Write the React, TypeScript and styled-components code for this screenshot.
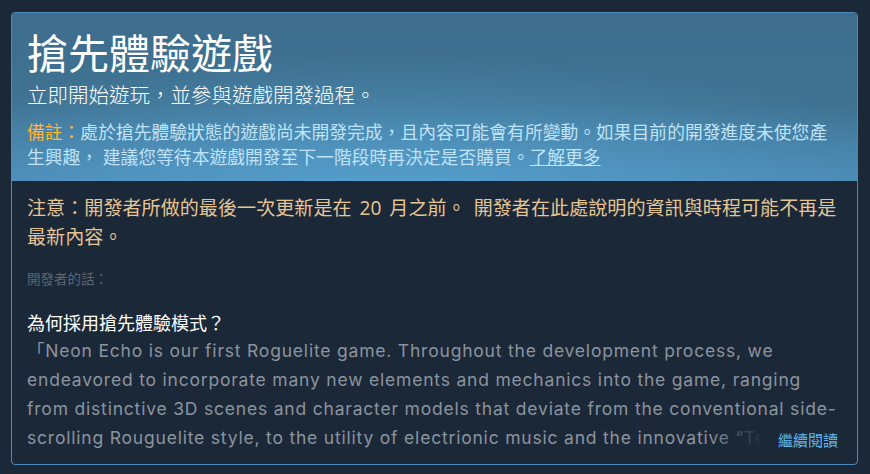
import React from "react";
import styled, { createGlobalStyle } from "styled-components";

const GlobalStyle = createGlobalStyle`
  html, body {
    margin: 0;
    padding: 0;
    background: #1b2838;
  }
  body {
    font-family: "Open Sans", "Noto Sans CJK TC", sans-serif;
  }
`;

const Page = styled.div`
  padding: 12px 13px 10px 11px;
  width: 870px;
  height: 474px;
  box-sizing: border-box;
`;

const Box = styled.section`
  width: 847px;
  height: 453px;
  box-sizing: border-box;
  border: 1px solid #4b8ac0;
  border-radius: 4px;
  overflow: hidden;
  display: flex;
  flex-direction: column;
  background: #1b2838;
`;

const Header = styled.header`
  padding: 17px 15px 11px 15px;
  background:
    radial-gradient(ellipse 70% 90% at 45% 115%, rgba(88, 165, 212, 0.85) 0%, rgba(88, 165, 212, 0) 100%),
    linear-gradient(180deg, #3e6d8e 0%, #3f7291 55%, #4a88b2 100%);
  display: flex;
  flex-direction: column;
`;

const Title = styled.h1`
  margin: 0;
  font-size: 41px;
  line-height: 46px;
  font-weight: 400;
  color: #ffffff;
`;

const Subtitle = styled.div`
  margin-top: 6px;
  font-size: 20.5px;
  line-height: 26px;
  font-weight: 300;
  color: #ffffff;
`;

const Note = styled.p`
  margin: 12px 0 0 0;
  font-size: 17.8px;
  line-height: 25px;
  color: #bfe3f8;
`;

const NoteLabel = styled.span`
  color: #ffb52e;
`;

const MoreLink = styled.a`
  color: #bfe3f8;
  text-decoration: underline;
`;

const Body = styled.div`
  padding: 13px 15px 0 15px;
  display: flex;
  flex-direction: column;
  flex: 1;
  min-height: 0;
`;

const Notice = styled.p`
  margin: 0;
  font-size: 19.1px;
  word-spacing: 3px;
  line-height: 29px;
  color: #e6c594;
`;

const DevLabel = styled.div`
  margin-top: 17px;
  font-size: 13.5px;
  line-height: 20px;
  color: #5a6775;
`;

const Question = styled.h2`
  margin: 21px 0 0 0;
  font-size: 18px;
  line-height: 26px;
  font-weight: 400;
  color: #ffffff;
`;

const ExcerptWrap = styled.div`
  position: relative;
  height: 118px;
  overflow: hidden;
`;

const Excerpt = styled.p`
  margin: 0;
  font-family: "Inter", "Noto Sans CJK TC", sans-serif;
  font-size: 17.5px;
  letter-spacing: 0.8px;
  line-height: 29px;
  color: #8b949e;
`;

const ReadMore = styled.a`
  position: absolute;
  right: 0;
  bottom: 0;
  height: 29px;
  padding-left: 70px;
  padding-right: 4px;
  display: flex;
  align-items: center;
  font-size: 15px;
  color: #5fb8f0;
  background: linear-gradient(90deg, rgba(27, 40, 56, 0) 0%, #1b2838 55px);
`;

export default function App() {
  return (
    <>
      <GlobalStyle />
      <Page>
        <Box>
          <Header>
            <Title>搶先體驗遊戲</Title>
            <Subtitle>立即開始遊玩，並參與遊戲開發過程。</Subtitle>
            <Note>
              <NoteLabel>備註：</NoteLabel>
              處於搶先體驗狀態的遊戲尚未開發完成，且內容可能會有所變動。如果目前的開發進度未使您產生興趣， 建議您等待本遊戲開發至下一階段時再決定是否購買。
              <MoreLink>了解更多</MoreLink>
            </Note>
          </Header>
          <Body>
            <Notice>
              注意：開發者所做的最後一次更新是在 20 月之前。 開發者在此處說明的資訊與時程可能不再是最新內容。
            </Notice>
            <DevLabel>開發者的話：</DevLabel>
            <Question>為何採用搶先體驗模式？</Question>
            <ExcerptWrap>
              <Excerpt>
                「Neon Echo is our first Roguelite game. Throughout the development process, we endeavored to incorporate many new elements and mechanics into the game, ranging from distinctive 3D scenes and character models that deviate from the conventional side-scrolling Rouguelite style, to the utility of electrionic music and the innovative “Techno” system that combines music with gameplay.
              </Excerpt>
              <ReadMore>繼續閱讀</ReadMore>
            </ExcerptWrap>
          </Body>
        </Box>
      </Page>
    </>
  );
}
